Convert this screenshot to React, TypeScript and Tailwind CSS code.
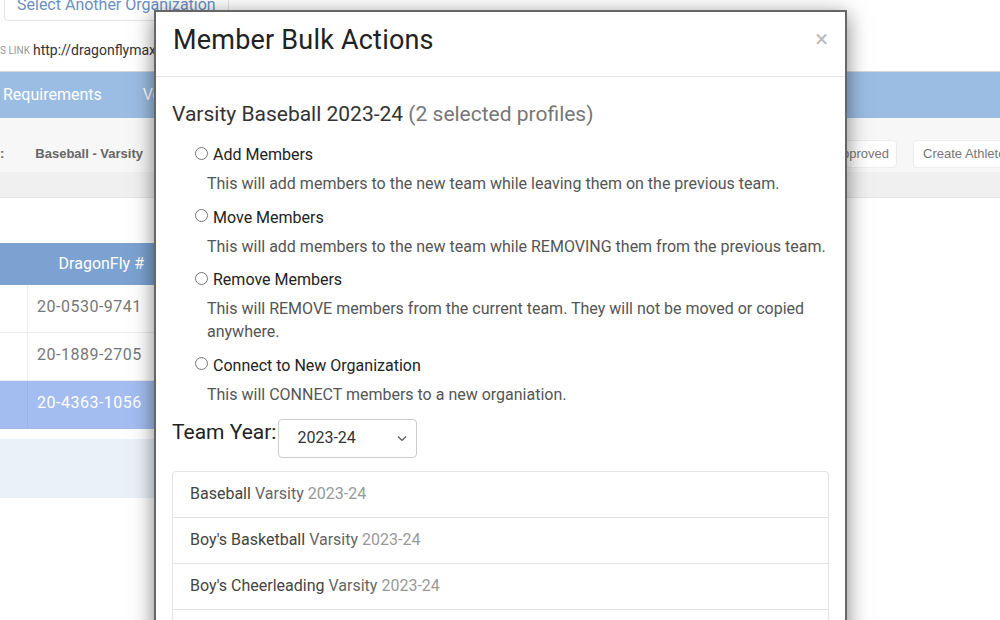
import React from "react";

const font = { fontFamily: "Roboto, 'Noto Sans', sans-serif" };

function Option({ label, desc }: { label: string; desc: React.ReactNode }) {
  return (
    <div className="pl-[23px]">
      <label className="flex items-center h-[24px] text-[16px] text-[#222]">
        <input type="radio" name="act" className="w-[13px] h-[13px] m-0 mr-[5px] -mt-[4px] accent-gray-500" />
        {label}
      </label>
      <p className="pl-[12px] mt-[5px] text-[16px] leading-[23px] text-[#555] -mr-[4px]">{desc}</p>
    </div>
  );
}

export default function App() {
  const teams = [
    ["Baseball", "Varsity", "2023-24"],
    ["Boy's Basketball", "Varsity", "2023-24"],
    ["Boy's Cheerleading", "Varsity", "2023-24"],
    ["Boy's Football", "Varsity", "2023-24"],
  ];
  return (
    <div className="relative w-[1000px] h-[620px] overflow-hidden bg-white" style={font}>
      {/* background page */}
      <div className="h-[30px] flex items-start pl-[4px]">
        <div className="-mt-[12px] h-[33px] px-[12px] flex items-center border border-[#e3e3e3] rounded-[4px] text-[#6a8fc0] text-[16px]">
          Select Another Organization
        </div>
      </div>
      <div className="h-[41px] flex items-center text-[14px] text-[#333]">
        <span className="text-[10px] text-[#999] mr-[3px]">S LINK</span>
        http://dragonflymax.com
      </div>
      <div className="h-[47px] bg-[#9bbde3] border-t border-[#d8d8d8] flex items-center text-white text-[16px]">
        <span className="pl-[3px]">Requirements</span>
        <span className="pl-[41px]">Verifications</span>
      </div>
      <div className="h-[54px] bg-[#f7f7f7] flex items-start pt-[22px] overflow-hidden text-[13px] font-bold text-[#666]" style={{ fontFamily: "'Liberation Sans', Arial, sans-serif" }}>
        <div className="h-[28px] flex items-center">
          <span className="mr-[31px]">:</span>
          <span>Baseball - Varsity</span>
        </div>
        <div className="flex-1" />
        <div className="flex items-center gap-[16px] font-normal text-[#777] -mr-[30px]">
          <div className="h-[28px] pl-[10px] pr-[7px] flex items-center bg-white border border-[#ececec] rounded-[4px]">Approved</div>
          <div className="h-[28px] pl-[9px] w-[117px] flex items-center bg-white border border-[#ececec] rounded-[4px] whitespace-nowrap">Create Athletes</div>
        </div>
      </div>
      <div className="h-[26px] bg-[#f0f0f0] border-b border-[#e2e2e2]" />
      <div className="h-[45px]" />
      <div className="w-[720px]">
        <div className="flex h-[42px] bg-[#7ba2d0] text-white text-[16px]">
          <div className="w-[28px]" />
          <div className="w-[124px] flex items-center justify-end pr-[8px]">DragonFly #</div>
        </div>
        {[
          ["20-0530-9741", false],
          ["20-1889-2705", false],
          ["20-4363-1056", true],
        ].map(([n, sel]) => (
          <div key={n as string} className={"flex h-[48px] text-[16px] border-b " + (sel ? "bg-[#a3bdf0] text-white border-[#a3bdf0]" : "text-[#777] border-[#ececec]")}>
            <div className={"w-[28px] border-r " + (sel ? "border-[#9bb3e0]" : "border-[#ececec]")} />
            <div className="flex items-center pl-[9px] tracking-[0.5px] -mt-[3px]">{n as string}</div>
          </div>
        ))}
        <div className="h-[10px]" />
        <div className="h-[59px] bg-[#eaf1f8]" />
      </div>

      {/* modal */}
      <div className="absolute left-[154px] top-[10px] w-[693px] h-[640px] bg-white border-2 border-[#666] shadow-[0_5px_20px_rgba(0,0,0,0.5)]">
        <div className="h-[65px] border-b border-[#e5e5e5] flex items-center justify-between pl-[17px] pr-[17px] pb-[8px]">
          <h1 className="text-[27px] text-[#222] tracking-[0.2px]">Member Bulk Actions</h1>
          <span className="text-[24px] text-[#bbb] leading-none -mt-[2px]">×</span>
        </div>
        <div className="px-[16px] pt-[22px]">
          <h2 className="text-[21px] text-[#333] leading-[30px]">
            Varsity Baseball 2023-24 <span className="text-[#777]">(2 selected profiles)</span>
          </h2>
          <div className="mt-[14px] flex flex-col gap-[10.5px]">
            <Option label="Add Members" desc="This will add members to the new team while leaving them on the previous team." />
            <Option label="Move Members" desc="This will add members to the new team while REMOVING them from the previous team." />
            <Option label="Remove Members" desc="This will REMOVE members from the current team. They will not be moved or copied anywhere." />
            <Option label="Connect to New Organization" desc="This will CONNECT members to a new organiation." />
          </div>
          <div className="mt-[13px] flex items-start">
            <span className="text-[21px] text-[#222] mt-[-2px]">Team Year:</span>
            <div className="ml-[2px] w-[139px] h-[39px] border border-[#ccc] rounded-[4px] flex items-center justify-between pl-[18px] pr-[8px] text-[16px] text-[#333]">
              2023-24
              <svg width="12" height="12" viewBox="0 0 12 12"><path d="M2 4.5 L6 8.5 L10 4.5" fill="none" stroke="#555" strokeWidth="1.2" /></svg>
            </div>
          </div>
          <div className="mt-[13px] border border-[#e3e3e3] rounded-[4px]">
            {teams.map(([a, b, c]) => (
              <div key={a} className="h-[46px] border-b border-[#e3e3e3] flex items-center pl-[17px] text-[16px]">
                <span className="text-[#444]">{a}</span>
                <span className="text-[#666] ml-[4px]">{b}</span>
                <span className="text-[#999] ml-[4px]">{c}</span>
              </div>
            ))}
          </div>
        </div>
      </div>
    </div>
  );
}
